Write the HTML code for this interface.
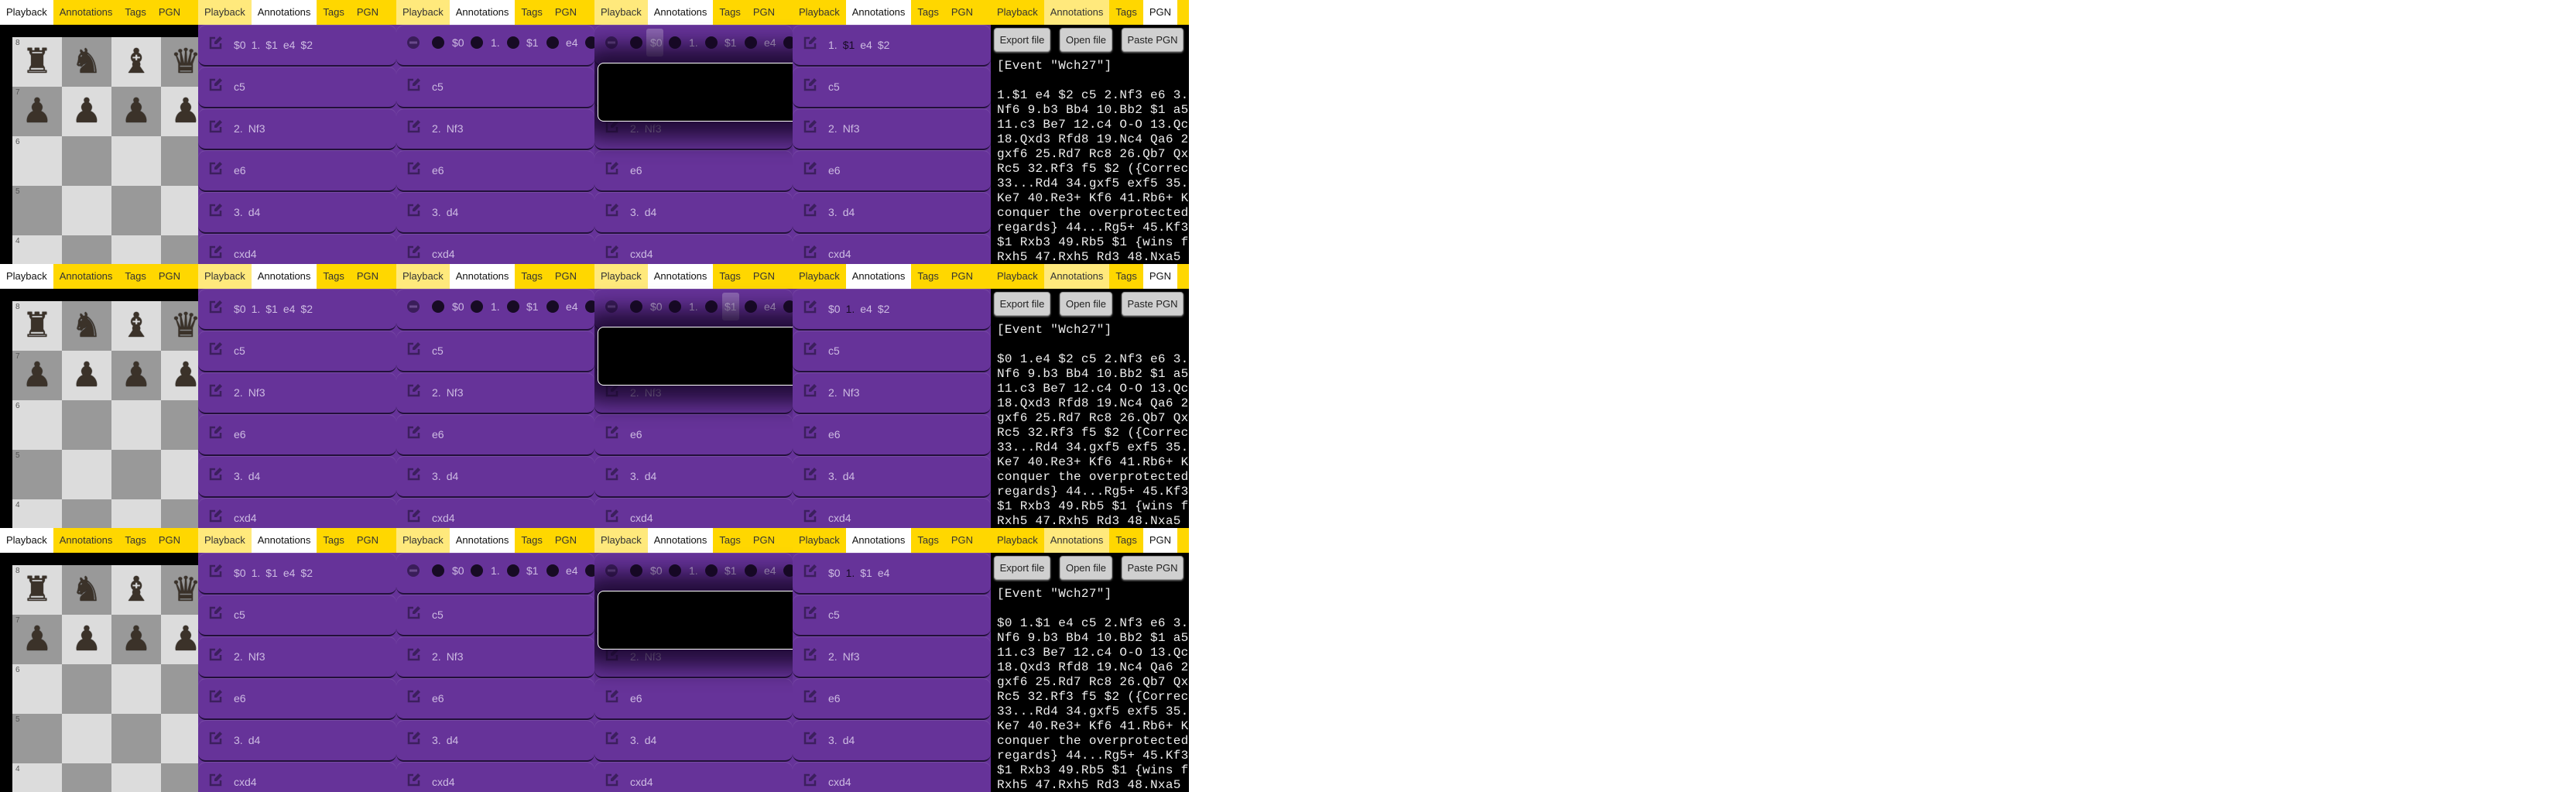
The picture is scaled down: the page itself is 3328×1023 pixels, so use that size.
<!DOCTYPE html>
<html><head><meta charset="utf-8"><style>
*{margin:0;padding:0;box-sizing:border-box}
body{width:3328px;height:1023px;background:#fff;position:relative;overflow:hidden;font-family:"Liberation Sans",sans-serif}
.p{position:absolute;width:256px;height:341px;overflow:hidden;background:#000}
.tabs{position:absolute;left:0;top:0;width:256px;height:32px;background:#ffd700;display:flex;white-space:nowrap}
.tab{padding:0 8px;line-height:32px;font-size:13px;color:#333}
.w{background:#fff;color:#111}.l{background:#ffe97c}
.list{position:absolute;left:0;top:32px;width:256px;height:309px;background:#663399}
.r{position:absolute;left:0;width:256px;height:54px;background:#663399;border-radius:10px;border-bottom:2px solid #22103a;box-shadow:inset 0 1px 0 rgba(255,255,255,.12)}
.r svg{position:absolute;left:14px;top:14px}
.tx{position:absolute;left:46px;top:17px;line-height:18px;font-size:14px;color:#cdbbe2;white-space:nowrap}
.tx span{margin-right:7px}
.dk{color:#170b24}
.c{position:absolute;top:15px;width:16px;height:16px;border-radius:50%;background:#170b24}
.t{position:absolute;top:14px;line-height:18px;font-size:14px;color:#cdbbe2}
.hl{position:absolute;top:5px;height:36px;border-radius:3px;background:rgba(255,255,255,.25)}
.pop{position:absolute;left:4px;top:81px;width:300px;height:76px;background:#000;border:1px solid #fff;border-radius:8px;box-shadow:0 0 28px 22px rgba(22,6,40,.85);z-index:5}
.board{position:absolute;left:16px;top:48px;width:512px;height:320px}
.sq{position:absolute;width:64px;height:64px;font-family:"DejaVu Sans",sans-serif;color:#3b3229;text-align:center;font-size:44px;line-height:64px;text-shadow:0 0 1px #000}
.sq i{position:absolute;left:4px;top:2px;font-style:normal;font-size:10px;line-height:12px;color:#555;font-family:"Liberation Sans",sans-serif;text-shadow:none}
.L{background:#dcdcdc}.D{background:#999}
.btn{position:absolute;top:36px;height:31px;background:#d0d0d0;border:1px solid #9a9a9a;border-radius:4px;box-shadow:0 1px 2px #777;font-size:13px;color:#222;text-align:center;line-height:29px}
pre{position:absolute;left:8px;top:76px;font-family:"Liberation Mono",monospace;font-size:16px;letter-spacing:0.3px;line-height:19px;color:#eee;white-space:pre}
</style></head><body>

<!-- ROW 1 -->
<div class="p" style="left:0;top:0">
<div class="tabs"><div class="tab w">Playback</div><div class="tab">Annotations</div><div class="tab">Tags</div><div class="tab">PGN</div></div>
<div class="board">
<div class="sq L" style="left:0;top:0"><i>8</i>♜</div><div class="sq D" style="left:64px;top:0">♞</div><div class="sq L" style="left:128px;top:0">♝</div><div class="sq D" style="left:192px;top:0">♛</div>
<div class="sq D" style="left:0;top:64px"><i>7</i>♟</div><div class="sq L" style="left:64px;top:64px">♟</div><div class="sq D" style="left:128px;top:64px">♟</div><div class="sq L" style="left:192px;top:64px">♟</div>
<div class="sq L" style="left:0;top:128px"><i>6</i></div><div class="sq D" style="left:64px;top:128px"></div><div class="sq L" style="left:128px;top:128px"></div><div class="sq D" style="left:192px;top:128px"></div>
<div class="sq D" style="left:0;top:192px"><i>5</i></div><div class="sq L" style="left:64px;top:192px"></div><div class="sq D" style="left:128px;top:192px"></div><div class="sq L" style="left:192px;top:192px"></div>
<div class="sq L" style="left:0;top:256px"><i>4</i></div><div class="sq D" style="left:64px;top:256px"></div><div class="sq L" style="left:128px;top:256px"></div><div class="sq D" style="left:192px;top:256px"></div>
</div></div>

<div class="p" style="left:256px;top:0">
<div class="tabs"><div class="tab l">Playback</div><div class="tab w">Annotations</div><div class="tab">Tags</div><div class="tab">PGN</div></div>
<div class="list">
<div class="r" style="top:0"><svg width="18" height="18" viewBox="0 0 18 18"><path d="M8 3H2v13h13V10" fill="none" stroke="#3c1f5e" stroke-width="2.5"/><path d="M14 1l3 3-7 7H7V8z" fill="#3c1f5e"/></svg><div class="tx"><span>$0</span><span>1.</span><span>$1</span><span>e4</span><span>$2</span></div></div>
<div class="r" style="top:54px"><svg width="18" height="18" viewBox="0 0 18 18"><path d="M8 3H2v13h13V10" fill="none" stroke="#3c1f5e" stroke-width="2.5"/><path d="M14 1l3 3-7 7H7V8z" fill="#3c1f5e"/></svg><div class="tx">c5</div></div>
<div class="r" style="top:108px"><svg width="18" height="18" viewBox="0 0 18 18"><path d="M8 3H2v13h13V10" fill="none" stroke="#3c1f5e" stroke-width="2.5"/><path d="M14 1l3 3-7 7H7V8z" fill="#3c1f5e"/></svg><div class="tx"><span>2.</span>Nf3</div></div>
<div class="r" style="top:162px"><svg width="18" height="18" viewBox="0 0 18 18"><path d="M8 3H2v13h13V10" fill="none" stroke="#3c1f5e" stroke-width="2.5"/><path d="M14 1l3 3-7 7H7V8z" fill="#3c1f5e"/></svg><div class="tx">e6</div></div>
<div class="r" style="top:216px"><svg width="18" height="18" viewBox="0 0 18 18"><path d="M8 3H2v13h13V10" fill="none" stroke="#3c1f5e" stroke-width="2.5"/><path d="M14 1l3 3-7 7H7V8z" fill="#3c1f5e"/></svg><div class="tx"><span>3.</span>d4</div></div>
<div class="r" style="top:270px"><svg width="18" height="18" viewBox="0 0 18 18"><path d="M8 3H2v13h13V10" fill="none" stroke="#3c1f5e" stroke-width="2.5"/><path d="M14 1l3 3-7 7H7V8z" fill="#3c1f5e"/></svg><div class="tx">cxd4</div></div>
</div></div>

<div class="p" style="left:512px;top:0">
<div class="tabs"><div class="tab l">Playback</div><div class="tab w">Annotations</div><div class="tab">Tags</div><div class="tab">PGN</div></div>
<div class="list">
<div class="r" style="top:0"><svg width="18" height="18" viewBox="0 0 18 18"><circle cx="8" cy="9" r="8" fill="#3a1d5a"/><rect x="3" y="7.5" width="10" height="3" fill="#6a4a8c"/></svg><div class="c" style="left:46px"></div><div class="t" style="left:72px">$0</div><div class="c" style="left:96px"></div><div class="t" style="left:122px">1.</div><div class="c" style="left:143px"></div><div class="t" style="left:168px">$1</div><div class="c" style="left:194px"></div><div class="t" style="left:219px">e4</div><div class="c" style="left:244px"></div></div>
<div class="r" style="top:54px"><svg width="18" height="18" viewBox="0 0 18 18"><path d="M8 3H2v13h13V10" fill="none" stroke="#3c1f5e" stroke-width="2.5"/><path d="M14 1l3 3-7 7H7V8z" fill="#3c1f5e"/></svg><div class="tx">c5</div></div>
<div class="r" style="top:108px"><svg width="18" height="18" viewBox="0 0 18 18"><path d="M8 3H2v13h13V10" fill="none" stroke="#3c1f5e" stroke-width="2.5"/><path d="M14 1l3 3-7 7H7V8z" fill="#3c1f5e"/></svg><div class="tx"><span>2.</span>Nf3</div></div>
<div class="r" style="top:162px"><svg width="18" height="18" viewBox="0 0 18 18"><path d="M8 3H2v13h13V10" fill="none" stroke="#3c1f5e" stroke-width="2.5"/><path d="M14 1l3 3-7 7H7V8z" fill="#3c1f5e"/></svg><div class="tx">e6</div></div>
<div class="r" style="top:216px"><svg width="18" height="18" viewBox="0 0 18 18"><path d="M8 3H2v13h13V10" fill="none" stroke="#3c1f5e" stroke-width="2.5"/><path d="M14 1l3 3-7 7H7V8z" fill="#3c1f5e"/></svg><div class="tx"><span>3.</span>d4</div></div>
<div class="r" style="top:270px"><svg width="18" height="18" viewBox="0 0 18 18"><path d="M8 3H2v13h13V10" fill="none" stroke="#3c1f5e" stroke-width="2.5"/><path d="M14 1l3 3-7 7H7V8z" fill="#3c1f5e"/></svg><div class="tx">cxd4</div></div>
</div></div>

<div class="p" style="left:768px;top:0">
<div class="tabs"><div class="tab l">Playback</div><div class="tab w">Annotations</div><div class="tab">Tags</div><div class="tab">PGN</div></div>
<div class="list">
<div class="r" style="top:0"><svg width="18" height="18" viewBox="0 0 18 18"><circle cx="8" cy="9" r="8" fill="#3a1d5a"/><rect x="3" y="7.5" width="10" height="3" fill="#6a4a8c"/></svg><div class="c" style="left:46px"></div><div class="hl" style="left:67px;width:22px"></div><div class="t" style="left:72px">$0</div><div class="c" style="left:96px"></div><div class="t" style="left:122px">1.</div><div class="c" style="left:143px"></div><div class="t" style="left:168px">$1</div><div class="c" style="left:194px"></div><div class="t" style="left:219px">e4</div><div class="c" style="left:244px"></div></div>
<div class="r" style="top:54px"><svg width="18" height="18" viewBox="0 0 18 18"><path d="M8 3H2v13h13V10" fill="none" stroke="#3c1f5e" stroke-width="2.5"/><path d="M14 1l3 3-7 7H7V8z" fill="#3c1f5e"/></svg><div class="tx">c5</div></div>
<div class="r" style="top:108px"><svg width="18" height="18" viewBox="0 0 18 18"><path d="M8 3H2v13h13V10" fill="none" stroke="#3c1f5e" stroke-width="2.5"/><path d="M14 1l3 3-7 7H7V8z" fill="#3c1f5e"/></svg><div class="tx"><span>2.</span>Nf3</div></div>
<div class="r" style="top:162px"><svg width="18" height="18" viewBox="0 0 18 18"><path d="M8 3H2v13h13V10" fill="none" stroke="#3c1f5e" stroke-width="2.5"/><path d="M14 1l3 3-7 7H7V8z" fill="#3c1f5e"/></svg><div class="tx">e6</div></div>
<div class="r" style="top:216px"><svg width="18" height="18" viewBox="0 0 18 18"><path d="M8 3H2v13h13V10" fill="none" stroke="#3c1f5e" stroke-width="2.5"/><path d="M14 1l3 3-7 7H7V8z" fill="#3c1f5e"/></svg><div class="tx"><span>3.</span>d4</div></div>
<div class="r" style="top:270px"><svg width="18" height="18" viewBox="0 0 18 18"><path d="M8 3H2v13h13V10" fill="none" stroke="#3c1f5e" stroke-width="2.5"/><path d="M14 1l3 3-7 7H7V8z" fill="#3c1f5e"/></svg><div class="tx">cxd4</div></div>
</div>
<div class="pop"></div></div>

<div class="p" style="left:1024px;top:0">
<div class="tabs"><div class="tab">Playback</div><div class="tab w">Annotations</div><div class="tab">Tags</div><div class="tab">PGN</div></div>
<div class="list">
<div class="r" style="top:0"><svg width="18" height="18" viewBox="0 0 18 18"><path d="M8 3H2v13h13V10" fill="none" stroke="#3c1f5e" stroke-width="2.5"/><path d="M14 1l3 3-7 7H7V8z" fill="#3c1f5e"/></svg><div class="tx"><span>1.</span><span class="dk">$1</span><span>e4</span><span>$2</span></div></div>
<div class="r" style="top:54px"><svg width="18" height="18" viewBox="0 0 18 18"><path d="M8 3H2v13h13V10" fill="none" stroke="#3c1f5e" stroke-width="2.5"/><path d="M14 1l3 3-7 7H7V8z" fill="#3c1f5e"/></svg><div class="tx">c5</div></div>
<div class="r" style="top:108px"><svg width="18" height="18" viewBox="0 0 18 18"><path d="M8 3H2v13h13V10" fill="none" stroke="#3c1f5e" stroke-width="2.5"/><path d="M14 1l3 3-7 7H7V8z" fill="#3c1f5e"/></svg><div class="tx"><span>2.</span>Nf3</div></div>
<div class="r" style="top:162px"><svg width="18" height="18" viewBox="0 0 18 18"><path d="M8 3H2v13h13V10" fill="none" stroke="#3c1f5e" stroke-width="2.5"/><path d="M14 1l3 3-7 7H7V8z" fill="#3c1f5e"/></svg><div class="tx">e6</div></div>
<div class="r" style="top:216px"><svg width="18" height="18" viewBox="0 0 18 18"><path d="M8 3H2v13h13V10" fill="none" stroke="#3c1f5e" stroke-width="2.5"/><path d="M14 1l3 3-7 7H7V8z" fill="#3c1f5e"/></svg><div class="tx"><span>3.</span>d4</div></div>
<div class="r" style="top:270px"><svg width="18" height="18" viewBox="0 0 18 18"><path d="M8 3H2v13h13V10" fill="none" stroke="#3c1f5e" stroke-width="2.5"/><path d="M14 1l3 3-7 7H7V8z" fill="#3c1f5e"/></svg><div class="tx">cxd4</div></div>
</div></div>

<div class="p" style="left:1280px;top:0">
<div class="tabs"><div class="tab">Playback</div><div class="tab l">Annotations</div><div class="tab">Tags</div><div class="tab w">PGN</div></div>
<div class="btn" style="left:4px;width:73px">Export file</div><div class="btn" style="left:89px;width:68px">Open file</div><div class="btn" style="left:169px;width:80px">Paste PGN</div>
<pre>[Event "Wch27"]

1.$1 e4 $2 c5 2.Nf3 e6 3.d4
Nf6 9.b3 Bb4 10.Bb2 $1 a5
11.c3 Be7 12.c4 O-O 13.Qc2
18.Qxd3 Rfd8 19.Nc4 Qa6 20
gxf6 25.Rd7 Rc8 26.Qb7 Qxb7
Rc5 32.Rf3 f5 $2 ({Correct
33...Rd4 34.gxf5 exf5 35.Rf
Ke7 40.Re3+ Kf6 41.Rb6+ Kg
conquer the overprotected
regards} 44...Rg5+ 45.Kf3
$1 Rxb3 49.Rb5 $1 {wins f
Rxh5 47.Rxh5 Rd3 48.Nxa5</pre></div>

<!-- ROW 2 -->
<div class="p" style="left:0;top:341px">
<div class="tabs"><div class="tab w">Playback</div><div class="tab">Annotations</div><div class="tab">Tags</div><div class="tab">PGN</div></div>
<div class="board">
<div class="sq L" style="left:0;top:0"><i>8</i>♜</div><div class="sq D" style="left:64px;top:0">♞</div><div class="sq L" style="left:128px;top:0">♝</div><div class="sq D" style="left:192px;top:0">♛</div>
<div class="sq D" style="left:0;top:64px"><i>7</i>♟</div><div class="sq L" style="left:64px;top:64px">♟</div><div class="sq D" style="left:128px;top:64px">♟</div><div class="sq L" style="left:192px;top:64px">♟</div>
<div class="sq L" style="left:0;top:128px"><i>6</i></div><div class="sq D" style="left:64px;top:128px"></div><div class="sq L" style="left:128px;top:128px"></div><div class="sq D" style="left:192px;top:128px"></div>
<div class="sq D" style="left:0;top:192px"><i>5</i></div><div class="sq L" style="left:64px;top:192px"></div><div class="sq D" style="left:128px;top:192px"></div><div class="sq L" style="left:192px;top:192px"></div>
<div class="sq L" style="left:0;top:256px"><i>4</i></div><div class="sq D" style="left:64px;top:256px"></div><div class="sq L" style="left:128px;top:256px"></div><div class="sq D" style="left:192px;top:256px"></div>
</div></div>

<div class="p" style="left:256px;top:341px">
<div class="tabs"><div class="tab l">Playback</div><div class="tab w">Annotations</div><div class="tab">Tags</div><div class="tab">PGN</div></div>
<div class="list">
<div class="r" style="top:0"><svg width="18" height="18" viewBox="0 0 18 18"><path d="M8 3H2v13h13V10" fill="none" stroke="#3c1f5e" stroke-width="2.5"/><path d="M14 1l3 3-7 7H7V8z" fill="#3c1f5e"/></svg><div class="tx"><span>$0</span><span>1.</span><span>$1</span><span>e4</span><span>$2</span></div></div>
<div class="r" style="top:54px"><svg width="18" height="18" viewBox="0 0 18 18"><path d="M8 3H2v13h13V10" fill="none" stroke="#3c1f5e" stroke-width="2.5"/><path d="M14 1l3 3-7 7H7V8z" fill="#3c1f5e"/></svg><div class="tx">c5</div></div>
<div class="r" style="top:108px"><svg width="18" height="18" viewBox="0 0 18 18"><path d="M8 3H2v13h13V10" fill="none" stroke="#3c1f5e" stroke-width="2.5"/><path d="M14 1l3 3-7 7H7V8z" fill="#3c1f5e"/></svg><div class="tx"><span>2.</span>Nf3</div></div>
<div class="r" style="top:162px"><svg width="18" height="18" viewBox="0 0 18 18"><path d="M8 3H2v13h13V10" fill="none" stroke="#3c1f5e" stroke-width="2.5"/><path d="M14 1l3 3-7 7H7V8z" fill="#3c1f5e"/></svg><div class="tx">e6</div></div>
<div class="r" style="top:216px"><svg width="18" height="18" viewBox="0 0 18 18"><path d="M8 3H2v13h13V10" fill="none" stroke="#3c1f5e" stroke-width="2.5"/><path d="M14 1l3 3-7 7H7V8z" fill="#3c1f5e"/></svg><div class="tx"><span>3.</span>d4</div></div>
<div class="r" style="top:270px"><svg width="18" height="18" viewBox="0 0 18 18"><path d="M8 3H2v13h13V10" fill="none" stroke="#3c1f5e" stroke-width="2.5"/><path d="M14 1l3 3-7 7H7V8z" fill="#3c1f5e"/></svg><div class="tx">cxd4</div></div>
</div></div>

<div class="p" style="left:512px;top:341px">
<div class="tabs"><div class="tab l">Playback</div><div class="tab w">Annotations</div><div class="tab">Tags</div><div class="tab">PGN</div></div>
<div class="list">
<div class="r" style="top:0"><svg width="18" height="18" viewBox="0 0 18 18"><circle cx="8" cy="9" r="8" fill="#3a1d5a"/><rect x="3" y="7.5" width="10" height="3" fill="#6a4a8c"/></svg><div class="c" style="left:46px"></div><div class="t" style="left:72px">$0</div><div class="c" style="left:96px"></div><div class="t" style="left:122px">1.</div><div class="c" style="left:143px"></div><div class="t" style="left:168px">$1</div><div class="c" style="left:194px"></div><div class="t" style="left:219px">e4</div><div class="c" style="left:244px"></div></div>
<div class="r" style="top:54px"><svg width="18" height="18" viewBox="0 0 18 18"><path d="M8 3H2v13h13V10" fill="none" stroke="#3c1f5e" stroke-width="2.5"/><path d="M14 1l3 3-7 7H7V8z" fill="#3c1f5e"/></svg><div class="tx">c5</div></div>
<div class="r" style="top:108px"><svg width="18" height="18" viewBox="0 0 18 18"><path d="M8 3H2v13h13V10" fill="none" stroke="#3c1f5e" stroke-width="2.5"/><path d="M14 1l3 3-7 7H7V8z" fill="#3c1f5e"/></svg><div class="tx"><span>2.</span>Nf3</div></div>
<div class="r" style="top:162px"><svg width="18" height="18" viewBox="0 0 18 18"><path d="M8 3H2v13h13V10" fill="none" stroke="#3c1f5e" stroke-width="2.5"/><path d="M14 1l3 3-7 7H7V8z" fill="#3c1f5e"/></svg><div class="tx">e6</div></div>
<div class="r" style="top:216px"><svg width="18" height="18" viewBox="0 0 18 18"><path d="M8 3H2v13h13V10" fill="none" stroke="#3c1f5e" stroke-width="2.5"/><path d="M14 1l3 3-7 7H7V8z" fill="#3c1f5e"/></svg><div class="tx"><span>3.</span>d4</div></div>
<div class="r" style="top:270px"><svg width="18" height="18" viewBox="0 0 18 18"><path d="M8 3H2v13h13V10" fill="none" stroke="#3c1f5e" stroke-width="2.5"/><path d="M14 1l3 3-7 7H7V8z" fill="#3c1f5e"/></svg><div class="tx">cxd4</div></div>
</div></div>

<div class="p" style="left:768px;top:341px">
<div class="tabs"><div class="tab l">Playback</div><div class="tab w">Annotations</div><div class="tab">Tags</div><div class="tab">PGN</div></div>
<div class="list">
<div class="r" style="top:0"><svg width="18" height="18" viewBox="0 0 18 18"><circle cx="8" cy="9" r="8" fill="#3a1d5a"/><rect x="3" y="7.5" width="10" height="3" fill="#6a4a8c"/></svg><div class="c" style="left:46px"></div><div class="t" style="left:72px">$0</div><div class="c" style="left:96px"></div><div class="t" style="left:122px">1.</div><div class="c" style="left:143px"></div><div class="hl" style="left:165px;width:22px"></div><div class="t" style="left:168px">$1</div><div class="c" style="left:194px"></div><div class="t" style="left:219px">e4</div><div class="c" style="left:244px"></div></div>
<div class="r" style="top:54px"><svg width="18" height="18" viewBox="0 0 18 18"><path d="M8 3H2v13h13V10" fill="none" stroke="#3c1f5e" stroke-width="2.5"/><path d="M14 1l3 3-7 7H7V8z" fill="#3c1f5e"/></svg><div class="tx">c5</div></div>
<div class="r" style="top:108px"><svg width="18" height="18" viewBox="0 0 18 18"><path d="M8 3H2v13h13V10" fill="none" stroke="#3c1f5e" stroke-width="2.5"/><path d="M14 1l3 3-7 7H7V8z" fill="#3c1f5e"/></svg><div class="tx"><span>2.</span>Nf3</div></div>
<div class="r" style="top:162px"><svg width="18" height="18" viewBox="0 0 18 18"><path d="M8 3H2v13h13V10" fill="none" stroke="#3c1f5e" stroke-width="2.5"/><path d="M14 1l3 3-7 7H7V8z" fill="#3c1f5e"/></svg><div class="tx">e6</div></div>
<div class="r" style="top:216px"><svg width="18" height="18" viewBox="0 0 18 18"><path d="M8 3H2v13h13V10" fill="none" stroke="#3c1f5e" stroke-width="2.5"/><path d="M14 1l3 3-7 7H7V8z" fill="#3c1f5e"/></svg><div class="tx"><span>3.</span>d4</div></div>
<div class="r" style="top:270px"><svg width="18" height="18" viewBox="0 0 18 18"><path d="M8 3H2v13h13V10" fill="none" stroke="#3c1f5e" stroke-width="2.5"/><path d="M14 1l3 3-7 7H7V8z" fill="#3c1f5e"/></svg><div class="tx">cxd4</div></div>
</div>
<div class="pop"></div></div>

<div class="p" style="left:1024px;top:341px">
<div class="tabs"><div class="tab">Playback</div><div class="tab w">Annotations</div><div class="tab">Tags</div><div class="tab">PGN</div></div>
<div class="list">
<div class="r" style="top:0"><svg width="18" height="18" viewBox="0 0 18 18"><path d="M8 3H2v13h13V10" fill="none" stroke="#3c1f5e" stroke-width="2.5"/><path d="M14 1l3 3-7 7H7V8z" fill="#3c1f5e"/></svg><div class="tx"><span>$0</span><span class="dk">1.</span><span>e4</span><span>$2</span></div></div>
<div class="r" style="top:54px"><svg width="18" height="18" viewBox="0 0 18 18"><path d="M8 3H2v13h13V10" fill="none" stroke="#3c1f5e" stroke-width="2.5"/><path d="M14 1l3 3-7 7H7V8z" fill="#3c1f5e"/></svg><div class="tx">c5</div></div>
<div class="r" style="top:108px"><svg width="18" height="18" viewBox="0 0 18 18"><path d="M8 3H2v13h13V10" fill="none" stroke="#3c1f5e" stroke-width="2.5"/><path d="M14 1l3 3-7 7H7V8z" fill="#3c1f5e"/></svg><div class="tx"><span>2.</span>Nf3</div></div>
<div class="r" style="top:162px"><svg width="18" height="18" viewBox="0 0 18 18"><path d="M8 3H2v13h13V10" fill="none" stroke="#3c1f5e" stroke-width="2.5"/><path d="M14 1l3 3-7 7H7V8z" fill="#3c1f5e"/></svg><div class="tx">e6</div></div>
<div class="r" style="top:216px"><svg width="18" height="18" viewBox="0 0 18 18"><path d="M8 3H2v13h13V10" fill="none" stroke="#3c1f5e" stroke-width="2.5"/><path d="M14 1l3 3-7 7H7V8z" fill="#3c1f5e"/></svg><div class="tx"><span>3.</span>d4</div></div>
<div class="r" style="top:270px"><svg width="18" height="18" viewBox="0 0 18 18"><path d="M8 3H2v13h13V10" fill="none" stroke="#3c1f5e" stroke-width="2.5"/><path d="M14 1l3 3-7 7H7V8z" fill="#3c1f5e"/></svg><div class="tx">cxd4</div></div>
</div></div>

<div class="p" style="left:1280px;top:341px">
<div class="tabs"><div class="tab">Playback</div><div class="tab l">Annotations</div><div class="tab">Tags</div><div class="tab w">PGN</div></div>
<div class="btn" style="left:4px;width:73px">Export file</div><div class="btn" style="left:89px;width:68px">Open file</div><div class="btn" style="left:169px;width:80px">Paste PGN</div>
<pre>[Event "Wch27"]

$0 1.e4 $2 c5 2.Nf3 e6 3.d4
Nf6 9.b3 Bb4 10.Bb2 $1 a5
11.c3 Be7 12.c4 O-O 13.Qc2
18.Qxd3 Rfd8 19.Nc4 Qa6 20
gxf6 25.Rd7 Rc8 26.Qb7 Qxb7
Rc5 32.Rf3 f5 $2 ({Correct
33...Rd4 34.gxf5 exf5 35.Rf
Ke7 40.Re3+ Kf6 41.Rb6+ Kg
conquer the overprotected
regards} 44...Rg5+ 45.Kf3
$1 Rxb3 49.Rb5 $1 {wins f
Rxh5 47.Rxh5 Rd3 48.Nxa5</pre></div>

<!-- ROW 3 -->
<div class="p" style="left:0;top:682px">
<div class="tabs"><div class="tab w">Playback</div><div class="tab">Annotations</div><div class="tab">Tags</div><div class="tab">PGN</div></div>
<div class="board">
<div class="sq L" style="left:0;top:0"><i>8</i>♜</div><div class="sq D" style="left:64px;top:0">♞</div><div class="sq L" style="left:128px;top:0">♝</div><div class="sq D" style="left:192px;top:0">♛</div>
<div class="sq D" style="left:0;top:64px"><i>7</i>♟</div><div class="sq L" style="left:64px;top:64px">♟</div><div class="sq D" style="left:128px;top:64px">♟</div><div class="sq L" style="left:192px;top:64px">♟</div>
<div class="sq L" style="left:0;top:128px"><i>6</i></div><div class="sq D" style="left:64px;top:128px"></div><div class="sq L" style="left:128px;top:128px"></div><div class="sq D" style="left:192px;top:128px"></div>
<div class="sq D" style="left:0;top:192px"><i>5</i></div><div class="sq L" style="left:64px;top:192px"></div><div class="sq D" style="left:128px;top:192px"></div><div class="sq L" style="left:192px;top:192px"></div>
<div class="sq L" style="left:0;top:256px"><i>4</i></div><div class="sq D" style="left:64px;top:256px"></div><div class="sq L" style="left:128px;top:256px"></div><div class="sq D" style="left:192px;top:256px"></div>
</div></div>

<div class="p" style="left:256px;top:682px">
<div class="tabs"><div class="tab l">Playback</div><div class="tab w">Annotations</div><div class="tab">Tags</div><div class="tab">PGN</div></div>
<div class="list">
<div class="r" style="top:0"><svg width="18" height="18" viewBox="0 0 18 18"><path d="M8 3H2v13h13V10" fill="none" stroke="#3c1f5e" stroke-width="2.5"/><path d="M14 1l3 3-7 7H7V8z" fill="#3c1f5e"/></svg><div class="tx"><span>$0</span><span>1.</span><span>$1</span><span>e4</span><span>$2</span></div></div>
<div class="r" style="top:54px"><svg width="18" height="18" viewBox="0 0 18 18"><path d="M8 3H2v13h13V10" fill="none" stroke="#3c1f5e" stroke-width="2.5"/><path d="M14 1l3 3-7 7H7V8z" fill="#3c1f5e"/></svg><div class="tx">c5</div></div>
<div class="r" style="top:108px"><svg width="18" height="18" viewBox="0 0 18 18"><path d="M8 3H2v13h13V10" fill="none" stroke="#3c1f5e" stroke-width="2.5"/><path d="M14 1l3 3-7 7H7V8z" fill="#3c1f5e"/></svg><div class="tx"><span>2.</span>Nf3</div></div>
<div class="r" style="top:162px"><svg width="18" height="18" viewBox="0 0 18 18"><path d="M8 3H2v13h13V10" fill="none" stroke="#3c1f5e" stroke-width="2.5"/><path d="M14 1l3 3-7 7H7V8z" fill="#3c1f5e"/></svg><div class="tx">e6</div></div>
<div class="r" style="top:216px"><svg width="18" height="18" viewBox="0 0 18 18"><path d="M8 3H2v13h13V10" fill="none" stroke="#3c1f5e" stroke-width="2.5"/><path d="M14 1l3 3-7 7H7V8z" fill="#3c1f5e"/></svg><div class="tx"><span>3.</span>d4</div></div>
<div class="r" style="top:270px"><svg width="18" height="18" viewBox="0 0 18 18"><path d="M8 3H2v13h13V10" fill="none" stroke="#3c1f5e" stroke-width="2.5"/><path d="M14 1l3 3-7 7H7V8z" fill="#3c1f5e"/></svg><div class="tx">cxd4</div></div>
</div></div>

<div class="p" style="left:512px;top:682px">
<div class="tabs"><div class="tab l">Playback</div><div class="tab w">Annotations</div><div class="tab">Tags</div><div class="tab">PGN</div></div>
<div class="list">
<div class="r" style="top:0"><svg width="18" height="18" viewBox="0 0 18 18"><circle cx="8" cy="9" r="8" fill="#3a1d5a"/><rect x="3" y="7.5" width="10" height="3" fill="#6a4a8c"/></svg><div class="c" style="left:46px"></div><div class="t" style="left:72px">$0</div><div class="c" style="left:96px"></div><div class="t" style="left:122px">1.</div><div class="c" style="left:143px"></div><div class="t" style="left:168px">$1</div><div class="c" style="left:194px"></div><div class="t" style="left:219px">e4</div><div class="c" style="left:244px"></div></div>
<div class="r" style="top:54px"><svg width="18" height="18" viewBox="0 0 18 18"><path d="M8 3H2v13h13V10" fill="none" stroke="#3c1f5e" stroke-width="2.5"/><path d="M14 1l3 3-7 7H7V8z" fill="#3c1f5e"/></svg><div class="tx">c5</div></div>
<div class="r" style="top:108px"><svg width="18" height="18" viewBox="0 0 18 18"><path d="M8 3H2v13h13V10" fill="none" stroke="#3c1f5e" stroke-width="2.5"/><path d="M14 1l3 3-7 7H7V8z" fill="#3c1f5e"/></svg><div class="tx"><span>2.</span>Nf3</div></div>
<div class="r" style="top:162px"><svg width="18" height="18" viewBox="0 0 18 18"><path d="M8 3H2v13h13V10" fill="none" stroke="#3c1f5e" stroke-width="2.5"/><path d="M14 1l3 3-7 7H7V8z" fill="#3c1f5e"/></svg><div class="tx">e6</div></div>
<div class="r" style="top:216px"><svg width="18" height="18" viewBox="0 0 18 18"><path d="M8 3H2v13h13V10" fill="none" stroke="#3c1f5e" stroke-width="2.5"/><path d="M14 1l3 3-7 7H7V8z" fill="#3c1f5e"/></svg><div class="tx"><span>3.</span>d4</div></div>
<div class="r" style="top:270px"><svg width="18" height="18" viewBox="0 0 18 18"><path d="M8 3H2v13h13V10" fill="none" stroke="#3c1f5e" stroke-width="2.5"/><path d="M14 1l3 3-7 7H7V8z" fill="#3c1f5e"/></svg><div class="tx">cxd4</div></div>
</div></div>

<div class="p" style="left:768px;top:682px">
<div class="tabs"><div class="tab l">Playback</div><div class="tab w">Annotations</div><div class="tab">Tags</div><div class="tab">PGN</div></div>
<div class="list">
<div class="r" style="top:0"><svg width="18" height="18" viewBox="0 0 18 18"><circle cx="8" cy="9" r="8" fill="#3a1d5a"/><rect x="3" y="7.5" width="10" height="3" fill="#6a4a8c"/></svg><div class="c" style="left:46px"></div><div class="t" style="left:72px">$0</div><div class="c" style="left:96px"></div><div class="t" style="left:122px">1.</div><div class="c" style="left:143px"></div><div class="t" style="left:168px">$1</div><div class="c" style="left:194px"></div><div class="t" style="left:219px">e4</div><div class="c" style="left:244px"></div></div>
<div class="r" style="top:54px"><svg width="18" height="18" viewBox="0 0 18 18"><path d="M8 3H2v13h13V10" fill="none" stroke="#3c1f5e" stroke-width="2.5"/><path d="M14 1l3 3-7 7H7V8z" fill="#3c1f5e"/></svg><div class="tx">c5</div></div>
<div class="r" style="top:108px"><svg width="18" height="18" viewBox="0 0 18 18"><path d="M8 3H2v13h13V10" fill="none" stroke="#3c1f5e" stroke-width="2.5"/><path d="M14 1l3 3-7 7H7V8z" fill="#3c1f5e"/></svg><div class="tx"><span>2.</span>Nf3</div></div>
<div class="r" style="top:162px"><svg width="18" height="18" viewBox="0 0 18 18"><path d="M8 3H2v13h13V10" fill="none" stroke="#3c1f5e" stroke-width="2.5"/><path d="M14 1l3 3-7 7H7V8z" fill="#3c1f5e"/></svg><div class="tx">e6</div></div>
<div class="r" style="top:216px"><svg width="18" height="18" viewBox="0 0 18 18"><path d="M8 3H2v13h13V10" fill="none" stroke="#3c1f5e" stroke-width="2.5"/><path d="M14 1l3 3-7 7H7V8z" fill="#3c1f5e"/></svg><div class="tx"><span>3.</span>d4</div></div>
<div class="r" style="top:270px"><svg width="18" height="18" viewBox="0 0 18 18"><path d="M8 3H2v13h13V10" fill="none" stroke="#3c1f5e" stroke-width="2.5"/><path d="M14 1l3 3-7 7H7V8z" fill="#3c1f5e"/></svg><div class="tx">cxd4</div></div>
</div>
<div class="pop"></div></div>

<div class="p" style="left:1024px;top:682px">
<div class="tabs"><div class="tab">Playback</div><div class="tab w">Annotations</div><div class="tab">Tags</div><div class="tab">PGN</div></div>
<div class="list">
<div class="r" style="top:0"><svg width="18" height="18" viewBox="0 0 18 18"><path d="M8 3H2v13h13V10" fill="none" stroke="#3c1f5e" stroke-width="2.5"/><path d="M14 1l3 3-7 7H7V8z" fill="#3c1f5e"/></svg><div class="tx"><span>$0</span><span class="dk">1.</span><span>$1</span><span>e4</span></div></div>
<div class="r" style="top:54px"><svg width="18" height="18" viewBox="0 0 18 18"><path d="M8 3H2v13h13V10" fill="none" stroke="#3c1f5e" stroke-width="2.5"/><path d="M14 1l3 3-7 7H7V8z" fill="#3c1f5e"/></svg><div class="tx">c5</div></div>
<div class="r" style="top:108px"><svg width="18" height="18" viewBox="0 0 18 18"><path d="M8 3H2v13h13V10" fill="none" stroke="#3c1f5e" stroke-width="2.5"/><path d="M14 1l3 3-7 7H7V8z" fill="#3c1f5e"/></svg><div class="tx"><span>2.</span>Nf3</div></div>
<div class="r" style="top:162px"><svg width="18" height="18" viewBox="0 0 18 18"><path d="M8 3H2v13h13V10" fill="none" stroke="#3c1f5e" stroke-width="2.5"/><path d="M14 1l3 3-7 7H7V8z" fill="#3c1f5e"/></svg><div class="tx">e6</div></div>
<div class="r" style="top:216px"><svg width="18" height="18" viewBox="0 0 18 18"><path d="M8 3H2v13h13V10" fill="none" stroke="#3c1f5e" stroke-width="2.5"/><path d="M14 1l3 3-7 7H7V8z" fill="#3c1f5e"/></svg><div class="tx"><span>3.</span>d4</div></div>
<div class="r" style="top:270px"><svg width="18" height="18" viewBox="0 0 18 18"><path d="M8 3H2v13h13V10" fill="none" stroke="#3c1f5e" stroke-width="2.5"/><path d="M14 1l3 3-7 7H7V8z" fill="#3c1f5e"/></svg><div class="tx">cxd4</div></div>
</div></div>

<div class="p" style="left:1280px;top:682px">
<div class="tabs"><div class="tab">Playback</div><div class="tab l">Annotations</div><div class="tab">Tags</div><div class="tab w">PGN</div></div>
<div class="btn" style="left:4px;width:73px">Export file</div><div class="btn" style="left:89px;width:68px">Open file</div><div class="btn" style="left:169px;width:80px">Paste PGN</div>
<pre>[Event "Wch27"]

$0 1.$1 e4 c5 2.Nf3 e6 3.d4
Nf6 9.b3 Bb4 10.Bb2 $1 a5
11.c3 Be7 12.c4 O-O 13.Qc2
18.Qxd3 Rfd8 19.Nc4 Qa6 20
gxf6 25.Rd7 Rc8 26.Qb7 Qxb7
Rc5 32.Rf3 f5 $2 ({Correct
33...Rd4 34.gxf5 exf5 35.Rf
Ke7 40.Re3+ Kf6 41.Rb6+ Kg
conquer the overprotected
regards} 44...Rg5+ 45.Kf3
$1 Rxb3 49.Rb5 $1 {wins f
Rxh5 47.Rxh5 Rd3 48.Nxa5</pre></div>

</body></html>
